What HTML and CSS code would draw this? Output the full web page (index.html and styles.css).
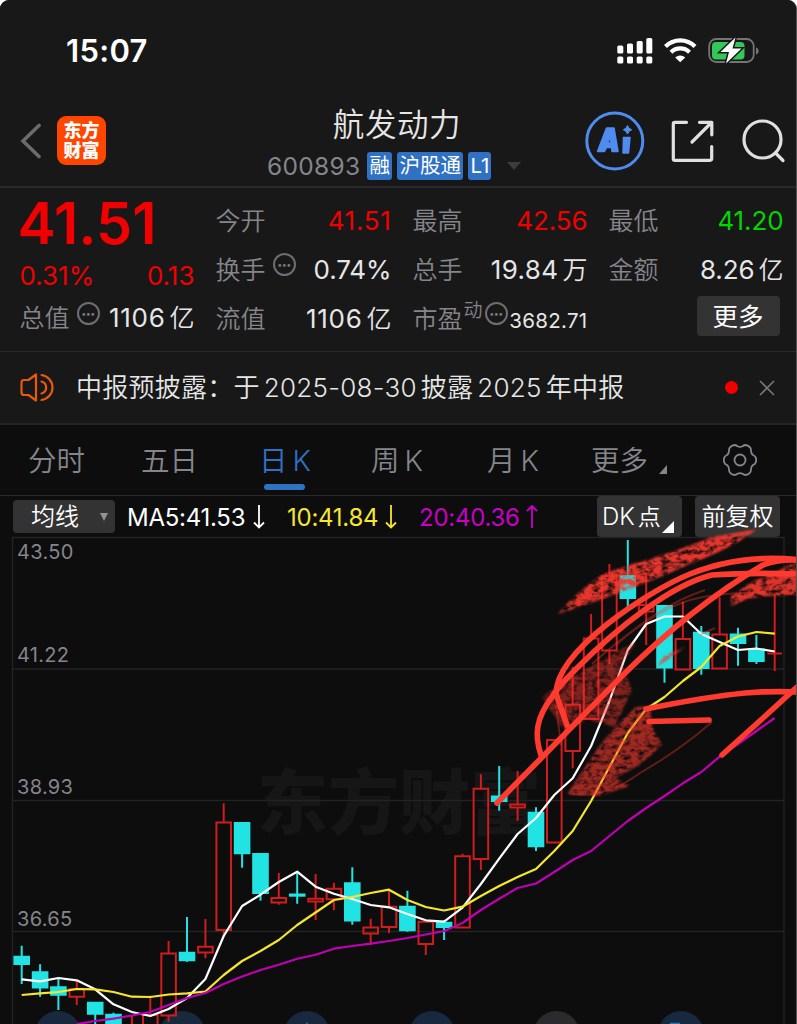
FILE: index.html
```
<!DOCTYPE html>
<html lang="zh-CN">

<head>
  <meta charset="UTF-8">
  <title>航发动力 600893</title>
  <link rel="stylesheet" href="styles.css">
</head>

<body>
  <div class="phone">
    <div class="top">
      <div class="statusbar">
        <span class="clock">15:07</span>
        <svg class="status-icons" width="144" height="28" viewBox="616 36 144 28">
          <g fill="#fff">
            <rect x="617.3" y="45.5" width="6" height="8" rx="1.6" />
            <rect x="627" y="43.5" width="6" height="10" rx="1.6" />
            <rect x="636.7" y="41" width="6" height="12.5" rx="1.6" />
            <rect x="646.3" y="38" width="6" height="15.5" rx="1.6" />
            <rect x="617.3" y="56.5" width="6" height="7" rx="1.6" />
            <rect x="627" y="56.5" width="6" height="7" rx="1.6" />
            <rect x="636.7" y="56.5" width="6" height="7" rx="1.6" />
            <rect x="646.3" y="56.5" width="6" height="7" rx="1.6" />
          </g>
          <g fill="none" stroke="#fff" stroke-width="4.2">
            <path d="M665.5 46.5a20.8 20.8 0 0 1 29.5 0" />
            <path d="M671 52.2a13.3 13.3 0 0 1 18.5 0" />
          </g>
          <path d="M675.2 57.4a7.5 7.5 0 0 1 10 0l-5 4.900z" fill="#fff" />
          <rect x="709.2" y="39" width="44.5" height="23" rx="7" fill="none" stroke="#747474" stroke-width="1.8" />
          <path d="M756 47.5v7c3.600-1.200 3.600-5.800 0-7z" fill="#747474" />
          <rect x="712" y="42" width="32.5" height="17.5" rx="4" fill="#32c759" />
          <path d="M735.5 37.5 720.5 52h8.500l-3 11.500 15.500-15h-9z" fill="#fff" stroke="#181818" stroke-width="3" paint-order="stroke" />
        </svg>
      </div>
      <div class="header">
        <svg class="back" width="22" height="36" viewBox="0 0 22 36">
          <path d="M19 2.5 3 18l16 15.500" fill="none" stroke="#6b6b6b" stroke-width="3.6" stroke-linecap="round" />
        </svg>
        <div class="logo">东方<br>财富</div>
        <div class="stock">
          <div class="stock-name">航发动力</div>
          <div class="stock-info">
            <span class="code">600893</span>
            <span class="tag">融</span>
            <span class="tag">沪股通</span>
            <span class="tag">L1</span>
            <i class="drop"></i>
          </div>
        </div>
        <svg class="actions" width="204" height="62" viewBox="584 110 204 62">
          <circle cx="614.8" cy="141" r="28" fill="none" stroke="#4e8cf0" stroke-width="3" />
          <g fill="#4e8cf0" stroke="#4e8cf0" stroke-linejoin="round">
            <path fill-rule="evenodd" stroke-width="1.5" d="M606.500 128h7.500l4 23.500h-6l-.5-4h-5l-2 4H597.500zM610.300 137l-2.600 6h3.300z" />
            <path stroke-width="1.5" d="M623.500 137.500h6.500l-1.500 15.500h-5.500z" />
            <path stroke-width="1" d="M627.500 125.500q1 3.300 4.200 4.300-3.200 1-4.200 4.300-1-3.300-4.200-4.300 3.200-1 4.200-4.300z" />
          </g>
          <g fill="none" stroke="#e0e0e0" stroke-width="3.2" stroke-linecap="round" stroke-linejoin="round">
            <path d="M686.500 122.300h-11.500q-1.700 0-1.700 1.700v35q0 1.300 1.700 1.300h35q1.700 0 1.700-1.700v-12" />
            <path d="M699.500 122.300h12.300v12.500M711.500 122.500 692 142" />
            <circle cx="762.5" cy="139.5" r="18.500" />
            <path d="m775.500 153 7.500 7.500" />
          </g>
        </svg>
      </div>
      <div class="quotes">
        <div class="col first">
          <div class="price">41.51</div>
          <div class="row change red"><span>0.31%</span><span>0.13</span></div>
          <div class="row total"><span class="label">总值</span><i class="dots">•••</i><b class="wide">1106<em>亿</em></b></div>
        </div>
        <div class="col">
          <div class="row"><span class="label">今开</span><b class="red wide">41.51</b></div>
          <div class="row"><span class="label">换手</span><i class="dots">•••</i><b>0.74%</b></div>
          <div class="row"><span class="label">流值</span><b class="wide">1106<em>亿</em></b></div>
        </div>
        <div class="col">
          <div class="row"><span class="label">最高</span><b class="red">42.56</b></div>
          <div class="row"><span class="label">总手</span><b class="mid">19.84<em>万</em></b></div>
          <div class="row"><span class="label">市盈</span><span class="sup">动</span><i class="dots tight">•••</i><b class="small">3682.71</b></div>
        </div>
        <div class="col">
          <div class="row"><span class="label">最低</span><b class="green">41.20</b></div>
          <div class="row"><span class="label">金额</span><b>8.26<em>亿</em></b></div>
          <div class="row last"><span class="more">更多</span></div>
        </div>
      </div>
      <div class="notice">
        <svg width="36" height="32" viewBox="0 0 36 32">
          <g fill="none" stroke="#e8590c" stroke-width="2.2" stroke-linejoin="round" stroke-linecap="round">
            <path d="M16 2.5v26L8.500 23H4q-2.500 0-2.500-2.500v-10Q1.500 8 4 8h4.500z" />
            <path d="M21.500 9.500a6.200 6.200 0 0 1 0 12M21.500 3a12.600 12.600 0 0 1 0 25" />
          </g>
        </svg>
        <p>中报预披露：<span class="yu">于</span><span>2025-08-30</span>披露<span>2025</span>年中报</p>
        <i class="dot"></i>
        <svg class="close" width="16" height="16" viewBox="0 0 16 16">
          <path d="m1 1 14 14M15 1 1 15" stroke="#777" stroke-width="1.6" />
        </svg>
      </div>
    </div>

    <div class="tabs">
      <span>分时</span>
      <span>五日</span>
      <span class="active">日<u>K</u></span>
      <span>周<u>K</u></span>
      <span>月<u>K</u></span>
      <span class="tab-more">更多<i></i></span>
      <svg width="34" height="32" viewBox="-17 -16 34 32">
        <g fill="none" stroke="#85858c" stroke-width="1.8" stroke-linejoin="round">
          <path d="M15.500-2.800Q17 0 15.500 2.800 15 4 13 5 11 6.500 11 9 11 11.500 10.300 12.300 8.700 14.800 5.500 15 4 15 2.500 13.800 0 12.500-2.500 13.800-4 15-5.500 15-8.700 14.800-10.300 12.300-11 11.500-11 9-11 6.500-13 5-15 4-15.500 2.800-17 0-15.500-2.800-15-4-13-5-11-6.500-11-9-11-11.500-10.300-12.300-8.700-14.800-5.500-15-4-15-2.500-13.800 0-12.500 2.500-13.800 4-15 5.500-15 8.700-14.800 10.300-12.300 11-11.500 11-9 11-6.500 13-5 15-4 15.500-2.800z" />
          <circle r="5.500" />
        </g>
      </svg>
    </div>

    <div class="toolbar">
      <div class="btn ma">均线<i></i></div>
      <div class="ma-text ma5">MA5:41.53<svg width="12" height="26" viewBox="0 0 12 26"><path d="M6 1v22M1 18.500l5 5 5-5" /></svg></div>
      <div class="ma-text ma10">10:41.84<svg width="12" height="26" viewBox="0 0 12 26"><path d="M6 1v22M1 18.500l5 5 5-5" /></svg></div>
      <div class="ma-text ma20">20:40.36<svg width="12" height="26" viewBox="0 0 12 26"><path d="M6 24V2M1 7l5-5 5 5" /></svg></div>
      <div class="btn dk">DK<em>点</em><i></i></div>
      <div class="btn fq">前复权</div>
    </div>

    <svg class="chart" width="797" height="487" viewBox="0 537 797 487">
      <defs>
        <filter id="chalk" x="-5%" y="-5%" width="110%" height="110%" color-interpolation-filters="sRGB">
          <feTurbulence type="fractalNoise" baseFrequency="0.13 0.2" numOctaves="4" seed="4" />
          <feColorMatrix values="0 0 0 0 .95  0 0 0 0 .22  0 0 0 0 .18  2.600 0 0 0 -.5" result="noise" />
          <feGaussianBlur in="SourceGraphic" stdDeviation="1" result="soft" />
          <feComposite in="noise" in2="soft" operator="in" />
        </filter>
      </defs>
      <text class="watermark" x="257" y="828">东方财富</text>
      <path class="grid" d="M12.500 1024V537.500H784V1024M12.500 669H784M12.500 800.500H784M12.500 931.500H784" />
      <g class="axis">
        <text x="17" y="559">43.50</text>
        <text x="17" y="662">41.22</text>
        <text x="17" y="794">38.93</text>
        <text x="17" y="926">36.65</text>
      </g>
      <g class="events">
        <circle cx="58" cy="1034" r="23" />
        <circle cx="182.5" cy="1034" r="23" />
        <circle cx="307" cy="1034" r="23" />
        <circle cx="432" cy="1034" r="23" />
        <circle cx="556.5" cy="1034" r="23" class="grey" />
        <circle cx="681" cy="1034" r="23" />
        <path d="M670 1023.500h10M307 1022.500v2" />
      </g>
      <g id="candles"></g>
      <g id="lines"></g>
      <g filter="url(#chalk)">
        <path opacity=".95" d="M558 614Q578 590 602 575 620 567 640 562 680 550 712 537L757 529Q735 547 690 564 650 582 600 600z" />
        <path opacity=".9" d="M731 606V596L752 582 797 562V595Q765 595 748 599z" />
        <path opacity=".5" d="M542 697 570 678 603 660 636 641 622 665 632 690 615 727 590 720 562 728z" />
        <path opacity=".65" d="M567 794 600 745 618 724 636 707 650 706 652 725 662 745 640 765 615 778 630 786 598 796z" />
        <path opacity=".7" d="M657 667 664 656 686 646 668 660z" />
      </g>
      <g class="faint">
        <path d="M570 794Q605 799 640 773 680 750 712 722" />
        <path d="M592 664Q650 612 690 600 730 590 780 594" />
        <path d="M616 645Q660 605 705 590" />
        <path d="M556 705 561 745M700 635 715 628" />
      </g>
      <g class="marker">
        <path d="M567 725 556 694C556 650 650 590 690 574 725 560 760 556 797 559.500" />
        <path d="M541 755C534 735 536 718 552 697 558 687 565 680 577 668 615 630 670 585 712 575 740 573 770 573 797 574" />
        <path d="M497 803 620 678C670 628 720 590 763 565Q778 559 797 560" />
        <path d="M646 709Q705 697 745 693 770 691 797 692" />
        <path d="M722 755Q760 721 797 687" />
        <path d="M649 721.500 709 720" />
      </g>
    </svg>
  </div>
  <script src="kline.js"></script>
</body>

</html>
```
FILE: styles.css
```
body {
  margin: 0;
  background: #fff;
  font-family: "Inter", "Noto Sans CJK SC", sans-serif;
  color: #e6e6e6;
}

.phone {
  box-sizing: border-box;
  width: 797px;
  height: 1024px;
  overflow: hidden;
  background: #0d0d0d;
  border-right: 1px solid #555;
  border-radius: 9px 9px 0 0;
}

i, em, b, u {
  font-style: normal;
  font-weight: 400;
  text-decoration: none;
}

.top {
  background: #181818;
}

/* status bar */
.statusbar {
  display: flex;
  justify-content: space-between;
  align-items: center;
  height: 100px;
  padding: 0 36px 0 66px;
}

.clock {
  font-size: 31px;
  font-weight: 600;
  letter-spacing: 0.3px;
  color: #fff;
}

/* header */
.header {
  display: flex;
  align-items: center;
  height: 82px;
  padding-bottom: 4px;
  border-bottom: 2px solid #2a2a2c;
}

.back {
  margin: -1px 15px 0 20px;
}

.logo {
  box-sizing: border-box;
  width: 49px;
  height: 49px;
  margin-top: -2px;
  padding-top: 5px;
  border-radius: 9px;
  background: #ff4600;
  color: #fff;
  font-size: 18px;
  line-height: 20px;
  font-weight: 900;
  text-align: center;
}

.stock {
  width: 292px;
  margin-left: 147px;
}

.stock-name {
  height: 49px;
  margin-left: 14px;
  line-height: 45px;
  font-size: 31.5px;
  font-weight: 350;
  letter-spacing: 0.6px;
  text-align: center;
  text-indent: -18px;
}

.stock-info {
  display: flex;
  align-items: center;
  gap: 5.5px;
  height: 30px;
  margin-left: 14px;
  white-space: nowrap;
}

.code {
  margin-right: 1.5px;
  font-size: 24.5px;
  letter-spacing: 0.3px;
  color: #85858c;
}

.tag {
  height: 28px;
  padding: 0 2px;
  border-radius: 3px;
  background: #2f71c3;
  color: #fff;
  font-size: 20.5px;
  line-height: 28px;
}

.drop {
  margin-left: 10px;
  border: 7px solid transparent;
  border-top: 8px solid #3c3c3c;
  border-bottom: 0;
}

.actions {
  margin: 0 0 0 39px;
}

/* quotes */
.quotes {
  display: grid;
  grid-template-columns: 175px 176px 175px 175px;
  column-gap: 21px;
  height: 155px;
  padding: 8px 0 0 19.5px;
  border-bottom: 1px solid #2a2a2c;
}

.row {
  display: flex;
  align-items: center;
  height: 49px;
  font-size: 26px;
  line-height: 48px;
}

.row b {
  margin-left: auto;
  letter-spacing: -0.1px;
}

.row .wide {
  letter-spacing: 0.7px;
}

.row .mid {
  letter-spacing: 0.4px;
}

.row em {
  margin-left: 4px;
  font-size: 25px;
  font-weight: 350;
  letter-spacing: 0;
}

.label {
  font-size: 25px;
  font-weight: 350;
  color: #85858b;
}

.price {
  height: 57px;
  margin: -3px 0 -1px -2px;
  font-size: 57.5px;
  line-height: 57px;
  font-weight: 600;
  letter-spacing: 0;
  color: #f00000;
}

.change {
  justify-content: space-between;
  height: 49px;
}

.first {
  padding-top: 2px;
}

.total {
  height: 36px;
}

.red {
  color: #f00000;
}

.green {
  color: #00d600;
}

.dots {
  box-sizing: border-box;
  width: 23px;
  height: 23px;
  margin: -10px 0 0 7px;
  border: 2px solid #6e6e72;
  border-radius: 50%;
  color: #77777c;
  font-size: 9px;
  line-height: 19px;
  letter-spacing: -0.5px;
  text-align: center;
}

.dots.tight {
  margin-left: 2px;
}

.sup {
  margin: -16px 0 0 1px;
  font-size: 19px;
  font-weight: 350;
  line-height: 24px;
  color: #85858b;
}

.row .small {
  padding-top: 5px;
  font-size: 20.5px;
  letter-spacing: 0.3px;
}

.last {
  justify-content: flex-end;
}

.more {
  width: 83px;
  height: 40px;
  margin: -6px 4px 0 0;
  border-radius: 4px;
  background: #333;
  font-size: 25.5px;
  line-height: 41px;
  text-align: center;
  color: #fff;
}

/* notice */
.notice {
  display: flex;
  align-items: center;
  height: 71px;
  padding: 0 21px 0 20px;
  border-bottom: 2px solid #252527;
}

.notice p {
  flex: 1;
  margin: -4px 0 0 20px;
  font-size: 26px;
  font-weight: 350;
  letter-spacing: 0.25px;
  white-space: nowrap;
}

.notice p span {
  margin: 0 4px;
}

.notice p .yu {
  margin: 0;
}

.dot {
  width: 13px;
  height: 13px;
  margin-right: 21px;
  border-radius: 50%;
  background: #f00000;
}

/* period tabs */
.tabs {
  display: grid;
  grid-template-columns: 113px 118px 112px 116px 104px 132px 34px;
  align-items: center;
  height: 70px;
  padding-left: 28px;
  border-bottom: 1px solid #2a2a2c;
  font-size: 28.5px;
  font-weight: 350;
  line-height: 71px;
  color: #85858c;
}

.tabs u {
  margin-left: 5px;
  font-weight: 350;
}

.tabs svg {
  margin-top: -2px;
}

.tabs .active {
  position: relative;
  color: #2f71c3;
}

.active::after {
  content: "";
  position: absolute;
  left: 5px;
  bottom: 6px;
  width: 41px;
  height: 6px;
  border-radius: 3px;
  background: #2f71c3;
}

.tab-more i {
  display: inline-block;
  margin-left: 11px;
  border-left: 8px solid transparent;
  border-bottom: 9px solid #85858c;
  transform: translateY(3px);
}

/* indicator bar */
.toolbar {
  display: flex;
  align-items: center;
  height: 41px;
  padding-left: 13px;
}

.btn {
  box-sizing: border-box;
  height: 41px;
  border-radius: 4px;
  background: #333;
  color: #fff;
  font-size: 24px;
  font-weight: 350;
  line-height: 42px;
  white-space: nowrap;
}

.ma {
  display: flex;
  align-items: center;
  justify-content: space-between;
  width: 102px;
  height: 33px;
  margin-right: 12px;
  padding: 0 7px 0 18px;
}

.ma i {
  border: 4.5px solid transparent;
  border-top: 8px solid #929296;
  border-bottom: 0;
}

.ma-text {
  display: flex;
  align-items: center;
  justify-content: space-between;
  padding-top: 1px;
  font-size: 24px;
  letter-spacing: -0.25px;
  white-space: nowrap;
}

.ma-text svg {
  fill: none;
  stroke: currentColor;
  stroke-width: 1.8;
}

.ma5 {
  width: 138px;
  margin-right: 22px;
  color: #fff;
}

.ma10 {
  width: 110px;
  margin-right: 22px;
  color: #f5e62f;
}

.ma20 {
  width: 119px;
  margin-right: 59px;
  color: #c800c8;
}

.dk {
  display: flex;
  width: 85px;
  margin-right: 13px;
  padding-left: 5px;
}

.dk em {
  margin-left: 3px;
  font-size: 23px;
  font-weight: 350;
}

.dk i {
  align-self: flex-end;
  margin: 0 0 4px 1px;
  border-left: 12px solid transparent;
  border-bottom: 12px solid #fff;
}

.fq {
  width: 85px;
  text-align: center;
}

/* chart */
.chart {
  display: block;
  overflow: visible;
}

.grid {
  fill: none;
  stroke: #232325;
  stroke-width: 1.4;
}

.axis text {
  font-size: 20px;
  letter-spacing: 0.3px;
  fill: #85858c;
}

.watermark {
  font-size: 71px;
  font-weight: 900;
  fill: #161616;
}

.events {
  fill: #18283f;
  stroke: none;
}

.events .grey {
  fill: #2b2b2d;
}

.events path {
  stroke: #2f71c3;
  stroke-width: 1.5;
}

.up {
  fill: none;
  stroke: #d01c1c;
  stroke-width: 2;
}

.down {
  fill: #22e3e3;
  stroke: #22e3e3;
  stroke-width: 2;
}

.line {
  fill: none;
  stroke-width: 2.2;
  stroke-linejoin: round;
}

.marker {
  fill: none;
  stroke: #ff3b30;
  stroke-width: 5.6;
  stroke-linecap: round;
  stroke-linejoin: round;
}

.faint {
  fill: none;
  stroke: #ff3b30;
  stroke-width: 2;
  opacity: 0.35;
}
```
FILE: kline.js
```
// type, high, body top, body bottom, low
var candles = [
  ['d', 945.7, 956.7, 964, 984], ['d', 964.3, 972.3, 987.5, 996.7], ['d', 978.3, 987.3, 994.7, 1010],
  ['u', 980.7, 989, 996.7, 1005], ['d', 1002.7, 1002.7, 1013.7, 1030], ['d', 1012.7, 1014.7, 1030, 1030],
  ['u', 1016, 1026, 1030, 1030], ['u', 995.7, 1015, 1030, 1030], ['u', 941, 953.5, 1015.5, 1021.7],
  ['d', 917, 952.7, 960.3, 961.7], ['u', 919, 946.7, 952.5, 958.3], ['u', 803.3, 822.5, 930, 937],
  ['d', 822, 823, 853.3, 867.7], ['d', 854, 854, 893, 900.7], ['u', 873, 898, 902.5, 904.7],
  ['d', 873, 894.5, 895.7, 903.7], ['u', 874, 898.7, 901.5, 920], ['u', 882.7, 888.7, 899.3, 910.3],
  ['d', 867.3, 883.3, 920.5, 924.7], ['u', 918.7, 927.5, 933.5, 945], ['u', 890, 906.7, 927, 933],
  ['d', 890.7, 906.7, 930.3, 931.7], ['u', 921.7, 921.7, 944, 955], ['d', 920, 922.7, 927, 940],
  ['u', 853.7, 856.3, 927.5, 927.5], ['u', 774.3, 788.7, 859, 870], ['d', 766, 796.5, 801, 810.7],
  ['u', 771, 804.5, 807.5, 820.7], ['d', 807.3, 812.7, 846.3, 851], ['u', 740, 740, 842.5, 842.5],
  ['u', 666.7, 704.7, 751, 768.3], ['u', 614, 638.5, 719, 719], ['u', 564, 576, 650.5, 664],
  ['d', 540, 576, 598, 608], ['u', 572.7, 605, 611.5, 645], ['d', 606, 606, 667.5, 682.7],
  ['u', 601.7, 639, 669.5, 669.5], ['d', 626, 632.7, 668, 674.7], ['u', 597.3, 634.5, 668.5, 669],
  ['d', 627.7, 634.5, 643, 665.7], ['d', 635, 649.5, 661, 664], ['u', 594, 653.5, 653.5, 671]
];

var averages = [
  { color: '#ffffff', start: 0, y: [979.3, 981.3, 978, 980.3, 989.3, 1004.3, 1012, 1016, 1009, 998, 979, 936, 906, 894.7, 882, 871.7, 886.7, 893.7, 899, 905, 907.3, 914, 920.3, 921.7, 907.7, 884, 858.7, 834, 818, 795, 778.3, 746, 701, 650, 624, 616.5, 616.5, 634, 642, 650, 648.5, 651.5] },
  { color: '#f5e62f', start: 0, y: [995, 993.3, 992, 989, 989.3, 992, 996.7, 997, 994.5, 993.3, 991.5, 975, 961, 951, 940, 925, 912.5, 900, 897, 893, 889.7, 900, 907, 910.5, 906.7, 896, 886, 877, 869, 851, 831, 801, 767, 733, 709, 697, 681, 667, 646, 636.5, 632, 633.7] },
  { color: '#c000b4', start: 3, y: [1024, 1021, 1018.7, 1015.5, 1012, 1005, 998, 993, 984, 976.5, 970, 964.7, 958.7, 954.7, 948.7, 946, 943.7, 941, 938, 934.5, 931, 923, 910, 898.7, 888, 883.5, 872, 860, 851, 836, 821, 808, 796, 783.3, 772, 756.7, 744, 731, 718] }
];

function xAt(i) {
  return +(21.7 + i * 18.367).toFixed(1);
}

document.getElementById('candles').innerHTML = candles.map(function (c, i) {
  var x = xAt(i);
  var cls = c[0] === 'u' ? 'up' : 'down';
  var path = 'M' + x + ' ' + c[1] + 'V' + c[2] + 'M' + x + ' ' + c[3] + 'V' + c[4];
  return '<path class="' + cls + '" d="' + path + '"/>' +
    '<path class="' + cls + '" d="M' + (x - 7.3) + ' ' + c[2] + 'h14.6V' + c[3] + 'h-14.6z"/>';
}).join('');

document.getElementById('lines').innerHTML = averages.map(function (a) {
  var points = a.y.map(function (y, i) {
    return xAt(i + a.start) + ',' + y;
  }).join(' ');
  return '<polyline class="line" stroke="' + a.color + '" points="' + points + '"/>';
}).join('');
```
